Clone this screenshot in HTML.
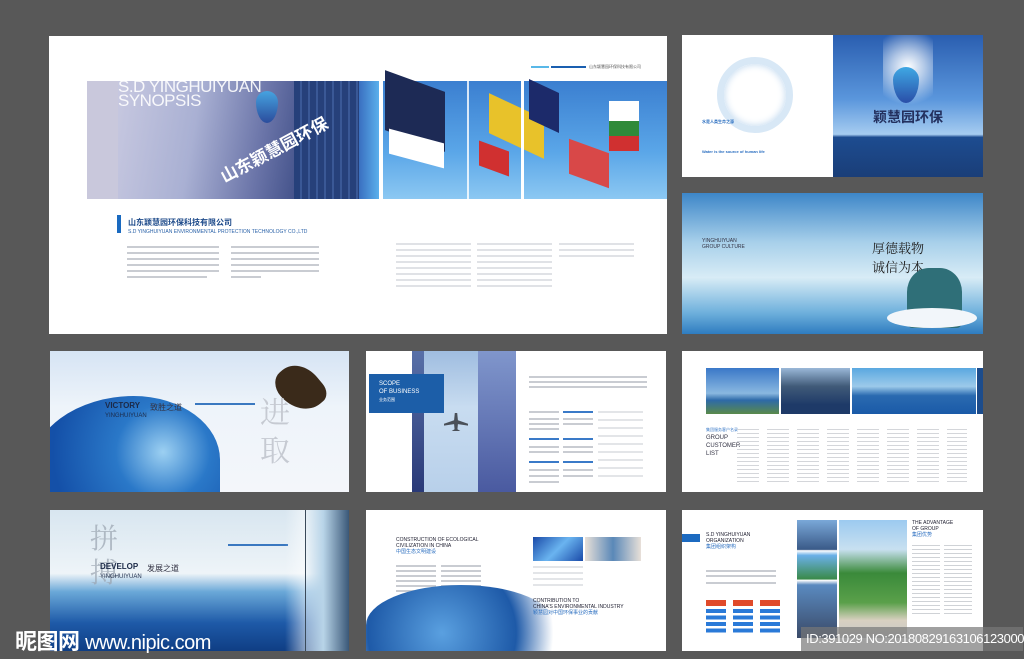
<!DOCTYPE html><html><head><meta charset="utf-8"><style>
*{margin:0;padding:0;box-sizing:border-box}
body{width:1024px;height:659px;background:#585858;position:relative;overflow:hidden;font-family:"Liberation Sans","Noto Sans CJK SC",sans-serif}
.p{position:absolute;background:#fff;overflow:hidden}
.a{position:absolute}
.l{position:absolute;height:2px;background:#c9ccd2}
</style></head><body>
<!-- big page -->
<div class="p" style="left:49px;top:36px;width:618px;height:298px">
 <div class="a" style="left:482px;top:30px;width:18px;height:2px;background:#59b8e8"></div>
 <div class="a" style="left:502px;top:30px;width:35px;height:2px;background:#1a5fb0"></div>
 <div class="a" style="left:540px;top:28px;font-size:4px;color:#555">山东颖慧园环保科技有限公司</div>
 <div class="a" style="left:38px;top:45px;width:31px;height:118px;background:#c9c8dc"></div>
 <div class="a" style="left:69px;top:45px;width:261px;height:118px;background:linear-gradient(100deg,#c7c8e0 0%,#a9b0d3 30%,#6a74a8 55%,#2b3d78 80%,#1d2f60 100%)"></div>
 <div class="a" style="left:245px;top:45px;width:85px;height:118px;background:repeating-linear-gradient(90deg,#26407a 0 6px,#3a5896 6px 8px)"></div>
 <div class="a" style="left:310px;top:45px;width:20px;height:118px;background:linear-gradient(90deg,#3a6fc0,#5ab0ec)"></div>
 <div class="a" style="left:69px;top:44px;color:#fff;font-size:17px;line-height:14px;opacity:.9;letter-spacing:-.5px">S.D YINGHUIYUAN<br>SYNOPSIS</div>
 <div class="a" style="left:207px;top:55px;width:22px;height:32px;border-radius:50% 50% 50% 50%/35% 35% 65% 65%;background:linear-gradient(#46a3e0,#2b4c9c)"></div>
 <div class="a" style="left:165px;top:100px;color:#fff;font-size:17px;font-weight:bold;transform:rotate(-28deg)">山东颖慧园环保</div>
 <div class="a" style="left:334px;top:45px;width:284px;height:118px;background:linear-gradient(180deg,#3b7fd0,#5aa6e8 60%,#8cc8f2)"></div>
 <div class="a" style="left:336px;top:45px;width:60px;height:60px;background:#1d2a55;transform:skewY(20deg)"></div>
 <div class="a" style="left:340px;top:100px;width:55px;height:25px;background:#fff;transform:skewY(15deg)"></div>
 <div class="a" style="left:440px;top:70px;width:55px;height:40px;background:#e8c22a;transform:skewY(25deg)"></div>
 <div class="a" style="left:430px;top:110px;width:30px;height:25px;background:#d03030;transform:skewY(20deg)"></div>
 <div class="a" style="left:480px;top:50px;width:30px;height:40px;background:#1c2a6a;transform:skewY(25deg)"></div>
 <div class="a" style="left:560px;top:65px;width:30px;height:20px;background:#fff"></div>
 <div class="a" style="left:560px;top:85px;width:30px;height:15px;background:#2f8a3a"></div>
 <div class="a" style="left:560px;top:100px;width:30px;height:15px;background:#d03030"></div>
 <div class="a" style="left:520px;top:110px;width:40px;height:35px;background:#d84848;transform:skewY(20deg)"></div>
 <div class="a" style="left:418px;top:45px;width:2px;height:118px;background:#fff;opacity:.8"></div>
 <div class="a" style="left:472px;top:45px;width:3px;height:118px;background:#fff"></div>
 <div class="a" style="left:68px;top:179px;width:4px;height:18px;background:#1a6ac0"></div>
 <div class="a" style="left:79px;top:181px;font-size:8px;font-weight:bold;color:#1d4a8a">山东颖慧园环保科技有限公司</div>
 <div class="a" style="left:79px;top:193px;font-size:5px;color:#2a62a8">S.D YINGHUIYUAN ENVIRONMENTAL PROTECTION TECHNOLOGY CO.,LTD</div>
 <div class="a" style="left:78px;top:210px;width:92px">
  <div class="l" style="top:0;width:92px"></div><div class="l" style="top:6px;width:92px"></div><div class="l" style="top:12px;width:92px"></div><div class="l" style="top:18px;width:92px"></div><div class="l" style="top:24px;width:92px"></div><div class="l" style="top:30px;width:80px"></div></div>
 <div class="a" style="left:182px;top:210px;width:88px">
  <div class="l" style="top:0;width:88px"></div><div class="l" style="top:6px;width:88px"></div><div class="l" style="top:12px;width:88px"></div><div class="l" style="top:18px;width:88px"></div><div class="l" style="top:24px;width:88px"></div><div class="l" style="top:30px;width:30px"></div></div>
 <div class="a" style="left:347px;top:207px"><div class="l" style="top:0;width:75px;background:#e0e2e6"></div><div class="l" style="top:6px;width:75px;background:#e0e2e6"></div><div class="l" style="top:12px;width:75px;background:#e0e2e6"></div><div class="l" style="top:18px;width:75px;background:#e0e2e6"></div><div class="l" style="top:24px;width:75px;background:#e0e2e6"></div><div class="l" style="top:30px;width:75px;background:#e0e2e6"></div><div class="l" style="top:36px;width:75px;background:#e0e2e6"></div><div class="l" style="top:42px;width:75px;background:#e0e2e6"></div></div>
 <div class="a" style="left:428px;top:207px"><div class="l" style="top:0;width:75px;background:#e0e2e6"></div><div class="l" style="top:6px;width:75px;background:#e0e2e6"></div><div class="l" style="top:12px;width:75px;background:#e0e2e6"></div><div class="l" style="top:18px;width:75px;background:#e0e2e6"></div><div class="l" style="top:24px;width:75px;background:#e0e2e6"></div><div class="l" style="top:30px;width:75px;background:#e0e2e6"></div><div class="l" style="top:36px;width:75px;background:#e0e2e6"></div><div class="l" style="top:42px;width:75px;background:#e0e2e6"></div></div>
 <div class="a" style="left:510px;top:207px"><div class="l" style="top:0;width:75px;background:#e0e2e6"></div><div class="l" style="top:6px;width:75px;background:#e0e2e6"></div><div class="l" style="top:12px;width:75px;background:#e0e2e6"></div></div>
</div>
<!-- top right 1 -->
<div class="p" style="left:682px;top:35px;width:151px;height:142px">
 <div class="a" style="left:35px;top:22px;width:76px;height:76px;border-radius:50%;border:7px solid #d8e8f6;box-shadow:inset 0 0 8px #bcd6ee"></div>
 <div class="a" style="left:20px;top:84px;font-size:4px;color:#2a6ec0;font-weight:bold">水是人类生命之源</div>
 <div class="a" style="left:20px;top:114px;font-size:4px;color:#2a6ec0;font-weight:bold">Water is the source of human life</div>
</div>
<div class="p" style="left:833px;top:35px;width:150px;height:142px;background:linear-gradient(180deg,#2a5eb0 0%,#5a96dc 45%,#a6ccf0 70%,#1d4c90 72%,#1a3e78 100%)">
 <div class="a" style="left:50px;top:0;width:50px;height:80px;background:radial-gradient(circle at 50% 40%,#fff 0,rgba(255,255,255,.6) 30%,transparent 70%)"></div>
 <div class="a" style="left:60px;top:32px;width:26px;height:36px;border-radius:50% 50% 50% 50%/35% 35% 65% 65%;background:linear-gradient(#3fa8e4,#2a4ea8)"></div>
 <div class="a" style="left:40px;top:72px;font-size:14px;font-weight:bold;color:#23305e">颖慧园环保</div>
</div>
<!-- top right 2 -->
<div class="p" style="left:682px;top:193px;width:301px;height:141px;background:linear-gradient(180deg,#3d86c8 0%,#a8d0ea 35%,#d8ecf6 60%,#6eb0dc 85%,#2e7cc0 100%)">
 <div class="a" style="left:20px;top:45px;font-size:5px;color:#334;line-height:6px">YINGHUIYUAN<br>GROUP CULTURE</div>
 <div class="a" style="left:190px;top:45px;font-size:13px;color:#222;font-family:'Noto Serif CJK SC',serif">厚德载物<br>诚信为本</div>
 <div class="a" style="left:225px;top:75px;width:55px;height:60px;background:#2f6f78;border-radius:40% 40% 10% 10%"></div>
 <div class="a" style="left:205px;top:115px;width:90px;height:20px;background:#f2f6fa;border-radius:50%"></div>
</div>
<!-- row 2 -->
<div class="p" style="left:50px;top:351px;width:299px;height:141px;background:linear-gradient(180deg,#d6e4f4,#eef4fa 40%,#f4f6fa)">
 <div class="a" style="left:-20px;top:45px;width:190px;height:140px;border-radius:60% 50% 0 0;background:radial-gradient(circle at 70% 40%,#9cd0f2 0,#2a78c8 30%,#1450a8 70%)"></div>
 <div class="a" style="left:55px;top:50px;font-size:8px;font-weight:bold;color:#1c2a48;line-height:9px">VICTORY<br><span style="font-weight:normal;font-size:6px">YINGHUIYUAN</span></div>
 <div class="a" style="left:100px;top:51px;font-size:8px;color:#334">致胜之道</div>
 <div class="a" style="left:145px;top:52px;width:60px;height:2px;background:#3a78c0"></div>
 <div class="a" style="left:230px;top:12px;width:40px;height:50px;background:#3a2a1a;border-radius:40% 60% 30% 70%;transform:rotate(-40deg)"></div>
 <div class="a" style="left:210px;top:40px;font-size:30px;color:#c6cad2;font-family:'Noto Serif CJK SC',serif;line-height:38px">进<br>取</div>
</div>
<div class="p" style="left:366px;top:351px;width:300px;height:141px">
 <div class="a" style="left:46px;top:0;width:100px;height:141px;background:linear-gradient(180deg,#9fbde0,#c8dcf0 40%,#b8d0ea)"></div>
 <div class="a" style="left:112px;top:0;width:38px;height:141px;background:linear-gradient(180deg,#8096cc,#4a5aa0)"></div>
 <div class="a" style="left:46px;top:0;width:12px;height:141px;background:linear-gradient(180deg,#5870a8,#2a3a78)"></div>
 <div class="a" style="left:3px;top:23px;width:75px;height:39px;background:#1c5ea8;color:#fff;font-size:6px;padding:6px 0 0 10px;line-height:8px">SCOPE<br>OF BUSINESS<br><span style="font-size:4px">业务范围</span></div>
 <div class="a" style="left:78px;top:62px;width:24px;height:18px;background:#4a5058;clip-path:polygon(45% 0,55% 0,58% 40%,100% 60%,100% 70%,58% 62%,56% 90%,68% 100%,32% 100%,44% 90%,42% 62%,0 70%,0 60%,42% 40%)"></div>
 <div class="a" style="left:163px;top:25px"><div class="l" style="top:0;width:118px"></div><div class="l" style="top:5px;width:118px"></div><div class="l" style="top:10px;width:118px"></div></div>
 <div class="a" style="left:163px;top:60px"><div class="l" style="top:0;width:30px"></div><div class="l" style="top:7px;width:30px"></div><div class="l" style="top:12px;width:30px"></div><div class="l" style="top:17px;width:30px"></div><div class="l" style="top:27px;width:30px;background:#3a7ac8"></div><div class="l" style="top:35px;width:30px"></div><div class="l" style="top:40px;width:30px"></div><div class="l" style="top:50px;width:30px;background:#3a7ac8"></div><div class="l" style="top:58px;width:30px"></div><div class="l" style="top:64px;width:30px"></div><div class="l" style="top:70px;width:30px"></div></div>
 <div class="a" style="left:197px;top:60px"><div class="l" style="top:0;width:30px;background:#3a7ac8"></div><div class="l" style="top:7px;width:30px"></div><div class="l" style="top:12px;width:30px"></div><div class="l" style="top:27px;width:30px;background:#3a7ac8"></div><div class="l" style="top:35px;width:30px"></div><div class="l" style="top:40px;width:30px"></div><div class="l" style="top:50px;width:30px;background:#3a7ac8"></div><div class="l" style="top:58px;width:30px"></div><div class="l" style="top:64px;width:30px"></div></div>
 <div class="a" style="left:232px;top:60px"><div class="l" style="top:0;width:45px;background:#e3e5e8"></div><div class="l" style="top:8px;width:45px;background:#e3e5e8"></div><div class="l" style="top:16px;width:45px;background:#e3e5e8"></div><div class="l" style="top:24px;width:45px;background:#e3e5e8"></div><div class="l" style="top:32px;width:45px;background:#e3e5e8"></div><div class="l" style="top:40px;width:45px;background:#e3e5e8"></div><div class="l" style="top:48px;width:45px;background:#e3e5e8"></div><div class="l" style="top:56px;width:45px;background:#e3e5e8"></div><div class="l" style="top:64px;width:45px;background:#e3e5e8"></div></div>
</div>
<div class="p" style="left:682px;top:351px;width:301px;height:141px">
 <div class="a" style="left:24px;top:17px;width:73px;height:46px;background:linear-gradient(180deg,#3a78c8,#8ab8e0 55%,#2e6aa8 70%,#5a8a4a)"></div>
 <div class="a" style="left:99px;top:17px;width:69px;height:46px;background:linear-gradient(180deg,#9ab8d8,#405a78 40%,#1e3a68 80%)"></div>
 <div class="a" style="left:170px;top:17px;width:124px;height:46px;background:linear-gradient(180deg,#5aa8e0,#9ccaea 40%,#2a6ab0 60%,#1a5aa8)"></div>
 <div class="a" style="left:295px;top:17px;width:6px;height:46px;background:#1c4c8c"></div>
 <div class="a" style="left:24px;top:75px;font-size:6px;color:#334;line-height:8px"><span style="color:#3a7ac8;font-size:4px">集团服务客户名录</span><br>GROUP<br>CUSTOMER<br>LIST</div>
 <div class="a" style="left:55px;top:78px;width:230px;height:55px;background:repeating-linear-gradient(180deg,#d4d6da 0 1px,transparent 1px 4px);-webkit-mask:repeating-linear-gradient(90deg,#000 0 22px,transparent 22px 30px)"></div>
</div>
<!-- row 3 -->
<div class="p" style="left:50px;top:510px;width:299px;height:141px;background:linear-gradient(180deg,#d8e6f0,#eef4f8 45%,#6aa8d8 58%,#1e5aa8 80%,#0f3e84)">
 <div class="a" style="left:40px;top:10px;font-size:28px;color:#9aa4b0;font-family:'Noto Serif CJK SC',serif;line-height:34px;opacity:.7">拼<br>搏</div>
 <div class="a" style="left:50px;top:52px;font-size:8px;font-weight:bold;color:#1c2a48;line-height:9px">DEVELOP<br><span style="font-weight:normal;font-size:6px">YINGHUIYUAN</span></div>
 <div class="a" style="left:97px;top:53px;font-size:8px;color:#334">发展之道</div>
 <div class="a" style="left:178px;top:34px;width:60px;height:2px;background:#3a78c0"></div>
 <div class="a" style="left:235px;top:0;width:64px;height:141px;background:linear-gradient(90deg,transparent,rgba(255,255,255,.5) 30%,#b8d4e8 60%,#3a5878)"></div>
 <div class="a" style="left:255px;top:0;width:1px;height:141px;background:#3a4a5a"></div>
</div>
<div class="p" style="left:366px;top:510px;width:300px;height:141px">
 <div class="a" style="left:30px;top:27px;font-size:5px;color:#223;line-height:6px">CONSTRUCTION OF ECOLOGICAL<br>CIVILIZATION IN CHINA<br><span style="color:#2a6ec0">中国生态文明建设</span></div>
 <div class="a" style="left:30px;top:55px"><div class="l" style="top:0;width:40px"></div><div class="l" style="top:5px;width:40px"></div><div class="l" style="top:10px;width:40px"></div><div class="l" style="top:15px;width:40px"></div><div class="l" style="top:20px;width:40px"></div><div class="l" style="top:25px;width:40px"></div></div>
 <div class="a" style="left:75px;top:55px"><div class="l" style="top:0;width:40px"></div><div class="l" style="top:5px;width:40px"></div><div class="l" style="top:10px;width:40px"></div><div class="l" style="top:15px;width:40px"></div><div class="l" style="top:20px;width:40px"></div></div>
 <div class="a" style="left:0;top:75px;width:190px;height:80px;border-radius:50% 50% 0 0;background:radial-gradient(circle at 40% 60%,#5aa0e0,#1e5aa8 60%,#fff 90%)"></div>
 <div class="a" style="left:167px;top:27px;width:50px;height:24px;background:linear-gradient(135deg,#1a4aa8,#6ab4f0,#1a4aa8)"></div>
 <div class="a" style="left:219px;top:27px;width:56px;height:24px;background:linear-gradient(90deg,#e8e0d8,#5a88b8 50%,#e8e0d8)"></div>
 <div class="a" style="left:167px;top:56px"><div class="l" style="top:0;width:50px;background:#e3e5e8"></div><div class="l" style="top:6px;width:50px;background:#e3e5e8"></div><div class="l" style="top:12px;width:50px;background:#e3e5e8"></div><div class="l" style="top:18px;width:50px;background:#e3e5e8"></div></div>
 <div class="a" style="left:167px;top:88px;font-size:5px;color:#223;line-height:6px">CONTRIBUTION TO<br>CHINA'S ENVIRONMENTAL INDUSTRY<br><span style="color:#2a6ec0">颖慧园对中国环保事业的贡献</span></div>
</div>
<div class="p" style="left:682px;top:510px;width:301px;height:141px">
 <div class="a" style="left:0;top:24px;width:18px;height:8px;background:#1c6ac0"></div>
 <div class="a" style="left:24px;top:22px;font-size:5px;color:#223;line-height:6px">S.D YINGHUIYUAN<br>ORGANIZATION<br><span style="color:#2a6ec0">集团组织架构</span></div>
 <div class="a" style="left:24px;top:60px"><div class="l" style="top:0;width:70px"></div><div class="l" style="top:5px;width:70px"></div><div class="l" style="top:12px;width:70px"></div></div>
 <div class="a" style="left:24px;top:90px;width:80px;height:6px;background:repeating-linear-gradient(90deg,#e04a2a 0 20px,transparent 20px 27px)"></div>
 <div class="a" style="left:24px;top:99px;width:80px;height:25px;background:repeating-linear-gradient(180deg,#2a7ad8 0 4px,transparent 4px 6.5px);-webkit-mask:repeating-linear-gradient(90deg,#000 0 20px,transparent 20px 27px)"></div>
 <div class="a" style="left:115px;top:10px;width:40px;height:118px;background:linear-gradient(180deg,#7aa8d8,#3a5a88 25%,#fff 26%,#6ab0e8 30%,#3a8a4a 50%,#fff 51%,#5a8ac0 55%,#3a4a68)"></div>
 <div class="a" style="left:157px;top:10px;width:68px;height:118px;background:linear-gradient(180deg,#9ccaf0,#c8e0f0 25%,#3a8a3a 45%,#5aa04a 70%,#d8d0c0 85%,#c8c8c8)"></div>
 <div class="a" style="left:230px;top:10px;font-size:5px;color:#223;line-height:6px">THE ADVANTAGE<br>OF GROUP<br><span style="color:#2a6ec0">集团优势</span></div>
 <div class="a" style="left:230px;top:35px;width:60px;height:70px;background:repeating-linear-gradient(180deg,#cfd2d6 0 1px,transparent 1px 4px);-webkit-mask:repeating-linear-gradient(90deg,#000 0 28px,transparent 28px 32px)"></div>
</div>
<div class="a" style="left:15px;top:624px;font-size:22px;font-weight:bold;color:#fff;white-space:nowrap;letter-spacing:-.5px">昵图网 <span style="font-size:20px;font-weight:normal">www.nipic.com</span></div>
<div class="a" style="left:801px;top:627px;width:222px;height:24px;background:rgba(120,120,120,.7)"></div>
<div class="a" style="left:806px;top:631px;font-size:13px;color:#fff;white-space:nowrap;letter-spacing:-.4px">ID:391029 NO:20180829163106123000</div>
</body></html>
